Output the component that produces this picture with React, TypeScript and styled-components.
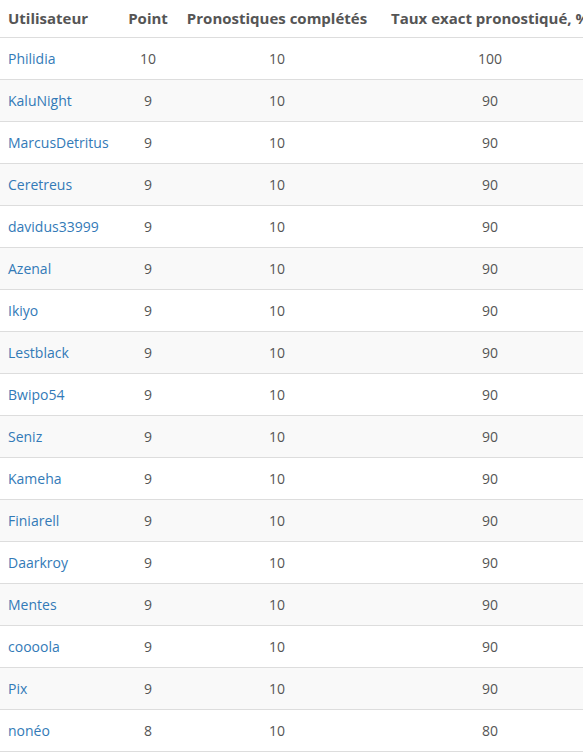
import styled, { createGlobalStyle } from "styled-components";

const GlobalStyle = createGlobalStyle`
  html, body {
    margin: 0;
    padding: 0;
    background: #fff;
    overflow: hidden;
  }
  body {
    font-family: "Open Sans", "Liberation Sans", sans-serif;
  }
`;

const Table = styled.table`
  width: 602px;
  table-layout: fixed;
  border-collapse: collapse;
  font-size: 14px;
  color: #555;
`;

const Head = styled.th<{ $width: number; $align?: string }>`
  width: ${({ $width }) => $width}px;
  padding: 8px 8px;
  font-size: 15px;
  line-height: 21px;
  font-weight: 700;
  text-align: ${({ $align }) => $align || "center"};
  white-space: nowrap;
  border-bottom: 1px solid #ddd;
`;

const Row = styled.tr`
  &:nth-child(even) {
    background-color: #f9f9f9;
  }
`;

const Cell = styled.td<{ $align?: string }>`
  padding: 10px 8px;
  line-height: 21px;
  text-align: ${({ $align }) => $align || "center"};
  white-space: nowrap;
  border-bottom: 1px solid #ddd;
`;

const UserLink = styled.a`
  color: #337ab7;
  text-decoration: none;
`;

const rows: [string, number, number, number][] = [
  ["Philidia", 10, 10, 100],
  ["KaluNight", 9, 10, 90],
  ["MarcusDetritus", 9, 10, 90],
  ["Ceretreus", 9, 10, 90],
  ["davidus33999", 9, 10, 90],
  ["Azenal", 9, 10, 90],
  ["Ikiyo", 9, 10, 90],
  ["Lestblack", 9, 10, 90],
  ["Bwipo54", 9, 10, 90],
  ["Seniz", 9, 10, 90],
  ["Kameha", 9, 10, 90],
  ["Finiarell", 9, 10, 90],
  ["Daarkroy", 9, 10, 90],
  ["Mentes", 9, 10, 90],
  ["coooola", 9, 10, 90],
  ["Pix", 9, 10, 90],
  ["nonéo", 8, 10, 80],
];

const App = () => {
  return (
    <>
      <GlobalStyle />
      <Table>
        <thead>
          <tr>
            <Head $width={104} $align="left">
              Utilisateur
            </Head>
            <Head $width={40}>Point</Head>
            <Head $width={186}>Pronostiques complétés</Head>
            <Head $width={208}>Taux exact pronostiqué, %</Head>
          </tr>
        </thead>
        <tbody>
          {rows.map(([name, points, done, rate]) => (
            <Row key={name}>
              <Cell $align="left">
                <UserLink href="#">{name}</UserLink>
              </Cell>
              <Cell>{points}</Cell>
              <Cell>{done}</Cell>
              <Cell>{rate}</Cell>
            </Row>
          ))}
        </tbody>
      </Table>
    </>
  );
};

export default App;
